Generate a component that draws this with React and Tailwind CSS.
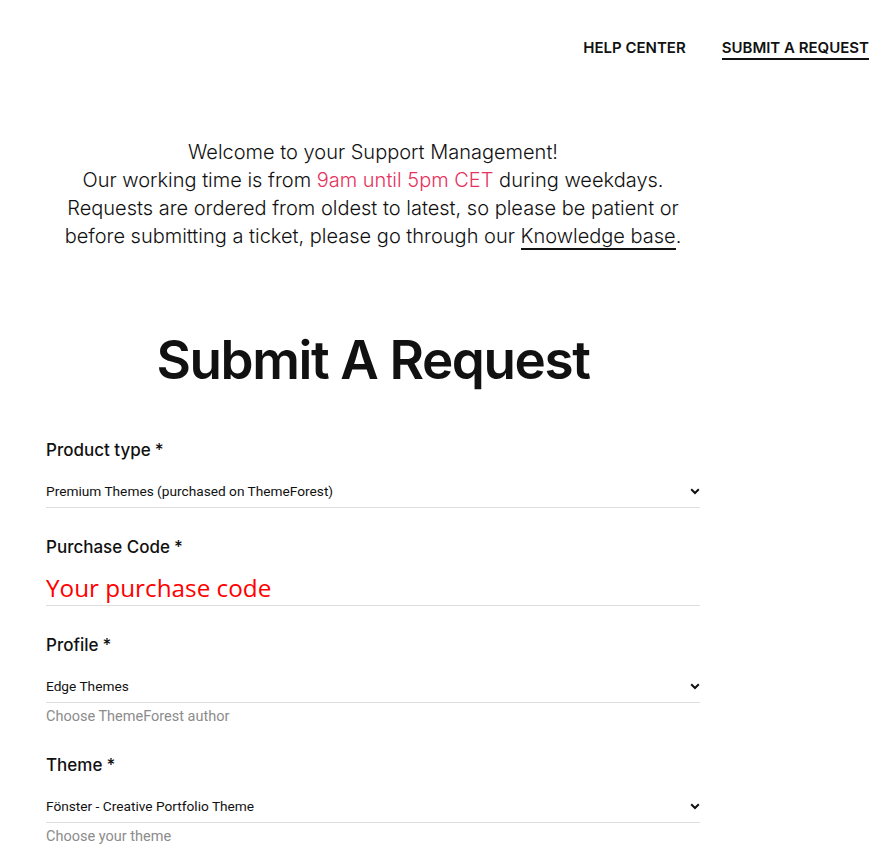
import React from 'react';

const Chevron = () => (
  <svg width="10" height="7" viewBox="0 0 10 7">
    <path d="M1.2 1.3 L5 5 L8.8 1.3" fill="none" stroke="#111" strokeWidth="2" />
  </svg>
);

const Label = ({ children, className = '' }) => (
  <div className={`text-[17px] leading-6 font-medium text-[#111] font-['Inter',sans-serif] ${className}`}>
    {children}<span className="ml-[4px]">*</span>
  </div>
);

const SelectRow = ({ value }) => (
  <div className="mt-[19px] flex items-center justify-between border-b border-[#dedede] pb-[6px]">
    <span className="text-[13.7px] leading-5 text-[#111] font-['Roboto',sans-serif]">{value}</span>
    <Chevron />
  </div>
);

const Help = ({ children }) => (
  <div className="mt-[4px] text-[14.5px] leading-5 text-[#8c8c8c] font-['Roboto',sans-serif]">{children}</div>
);

export default function App() {
  return (
    <div className="min-h-screen bg-white font-['Inter',sans-serif] text-[#111]">
      {/* Navbar */}
      <nav className="flex justify-end gap-9 pr-4 pt-[38px] text-[15px] font-semibold uppercase leading-5">
        <a className="border-b-2 border-transparent">Help Center</a>
        <a className="border-b-2 border-[#111]">Submit A Request</a>
      </nav>

      <div className="ml-[46px] w-[654px]">
        {/* Welcome */}
        <p className="mt-[78px] text-center text-[20px] font-light leading-[28px]">
          Welcome to your Support Management!
          <br />
          Our working time is from <span className="text-[#e6335d]">9am until 5pm CET</span> during weekdays.
          <br />
          Requests are ordered from oldest to latest, so please be patient or
          <br />
          before submitting a ticket, please go through our{' '}
          <a className="border-b-2 border-[#111]">Knowledge base</a>.
        </p>

        <h1 className="mt-[78px] text-center text-[53px] font-semibold leading-[64px] tracking-[-1.4px]">
          Submit A Request
        </h1>

        {/* Form */}
        <form className="mt-[46px]">
          <Label>Product type</Label>
          <SelectRow value="Premium Themes (purchased on ThemeForest)" />

          <Label className="mt-[27px]">Purchase Code</Label>
          <div className="mt-[13px] border-b border-[#dedede] pb-[1px]">
            <span className="text-[24.3px] leading-8 text-[#ff0000] font-['Open_Sans',sans-serif]">Your purchase code</span>
          </div>

          <Label className="mt-[27px]">Profile</Label>
          <SelectRow value="Edge Themes" />
          <Help>Choose ThemeForest author</Help>

          <Label className="mt-[26px]">Theme</Label>
          <SelectRow value="Fönster - Creative Portfolio Theme" />
          <Help>Choose your theme</Help>
        </form>
      </div>
    </div>
  );
}
